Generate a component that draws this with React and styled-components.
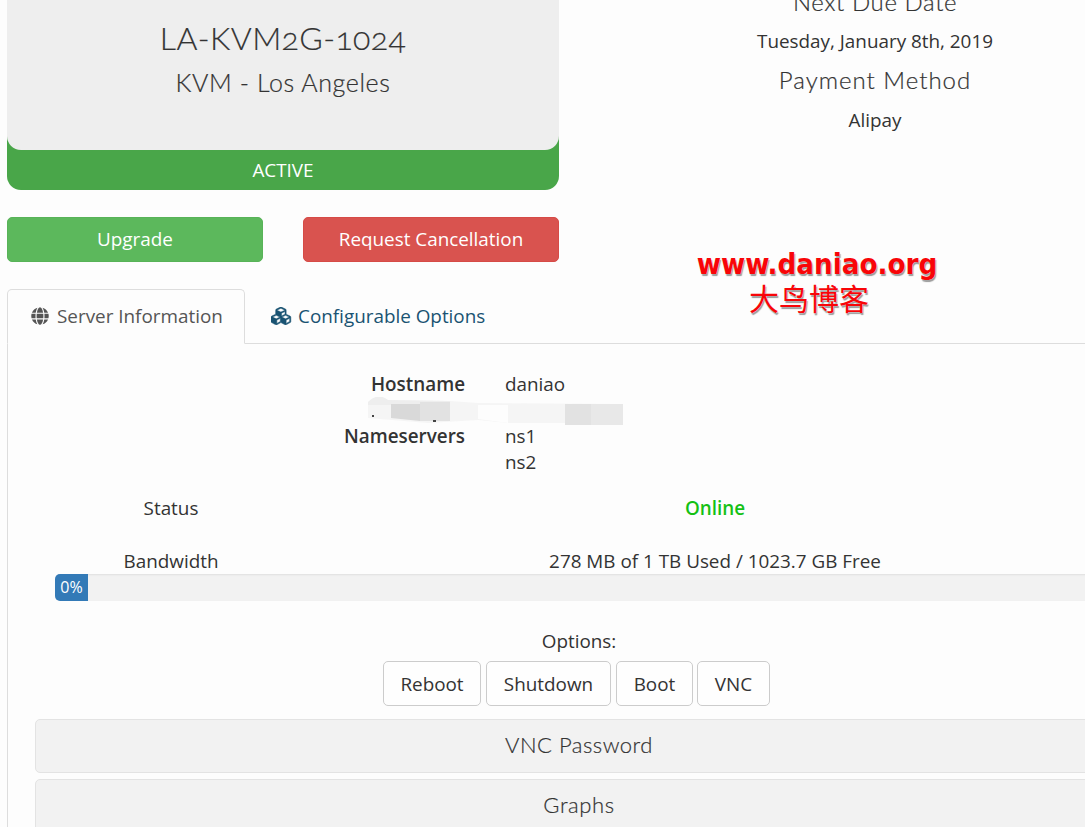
import React from "react";
import styled, { createGlobalStyle } from "styled-components";
import { FaGlobe } from "react-icons/fa";

const GlobalStyle = createGlobalStyle`
  * { box-sizing: border-box; }
  body {
    margin: 0;
    background: #fdfdfd;
    color: #333;
    font: 18.88px/26px "Open Sans", sans-serif;
    overflow: hidden;
  }
`;

const Page = styled.main`
  width: 100%;
  height: 827px;
  padding-left: 7px;
  overflow: hidden;
`;

const Overview = styled.section`
  display: grid;
  grid-template-columns: 552px 552px;
  column-gap: 40px;
  height: 289px;
`;

const Product = styled.div`
  height: 190px;
  background: #49a649;
  border-radius: 0 0 14px 14px;
  text-align: center;
`;

const ProductCard = styled.div`
  height: 150px;
  padding-top: 16px;
  background: #eee;
  border-radius: 0 0 14px 14px;
`;

const Heading = styled.div`
  font-family: Lato, sans-serif;
  font-weight: 300;
  font-variant-numeric: oldstyle-nums;
  font-size: ${(p) => p.$size}px;
  line-height: ${(p) => p.$line}px;
  letter-spacing: ${(p) => p.$track || 0}px;
  -webkit-text-stroke: 0.2px currentColor;
`;

const ProductStatus = styled.div`
  height: 40px;
  line-height: 40px;
  color: #fff;
`;

const Actions = styled.div`
  display: grid;
  grid-template-columns: 1fr 1fr;
  gap: 40px;
  margin-top: 27px;
`;

const ActionButton = styled.button`
  height: 45px;
  padding: 0 0 2px;
  border: 1px solid ${(p) => p.$edge};
  border-radius: 5px;
  background: ${(p) => p.$fill};
  color: #fff;
  font: inherit;
`;

const Billing = styled.div`
  display: flex;
  flex-direction: column;
  align-items: center;
  margin-top: -14px;
`;

const BillingValue = styled.div`
  margin: 11px 0 10px;
  line-height: 26px;

  &:nth-child(4) { margin-top: 12px; }
`;

const Watermark = styled.div`
  margin: 104px 0 0 -116px;
  color: #f80508;
  text-align: center;
  text-shadow: 0 0 1px #fff, 1px 2px 1px #999;
`;

const WatermarkUrl = styled.div`
  font-family: "DejaVu Sans Condensed", "DejaVu Sans", sans-serif;
  font-stretch: condensed;
  font-size: 29.2px;
  line-height: 34px;
  font-weight: 700;
`;

const WatermarkName = styled.div`
  padding: 1px 16px 0 0;
  font-family: "Liberation Serif", "Noto Sans CJK SC", serif;
  font-size: 30px;
  line-height: 36px;
`;

const Tabs = styled.nav`
  display: flex;
  height: 55px;
  border-bottom: 1px solid #ddd;
`;

const Tab = styled.a`
  display: flex;
  align-items: center;
  gap: ${(p) => (p.$active ? 8 : 6)}px;
  height: 55px;
  width: ${(p) => p.$width}px;
  padding-bottom: 2px;
  padding-left: ${(p) => (p.$active ? 23 : 25)}px;
  border: 1px solid ${(p) => (p.$active ? "#ddd" : "transparent")};
  border-bottom-color: ${(p) => (p.$active ? "#fdfdfd" : "transparent")};
  border-radius: 5px 5px 0 0;
  color: ${(p) => (p.$active ? "#555" : "#195372")};
  white-space: nowrap;
  svg { flex: none; }
`;

const Panel = styled.section`
  width: 1144px;
  height: 483px;
  padding: 27px 28px 0 27px;
  border-left: 1px solid #ddd;
`;

const Details = styled.dl`
  display: grid;
  grid-template-columns: 430px 1fr;
  column-gap: 40px;
  margin: 0;
`;

const Term = styled.dt`
  font-weight: 600;
  text-align: right;
`;

const Value = styled.dd`
  margin: 0;
`;

const Redaction = styled.div`
  grid-column: 1 / -1;
  height: 26px;
  padding: 0 0 0 333px;
  svg { display: block; }
`;

const StatRow = styled.div`
  display: grid;
  grid-template-columns: 1fr 3fr;
  margin-top: ${(p) => p.$top}px;
  text-align: center;
`;

const Online = styled.span`
  color: #15c115;
  font-weight: 600;
`;

const Track = styled.div`
  height: 27px;
  margin: 0 20px;
  border-radius: 5px;
  background: #f2f2f2;
  box-shadow: inset 0 1px 2px rgba(0, 0, 0, 0.08);
`;

const Bar = styled.div`
  width: 33px;
  height: 27px;
  border-radius: 5px 0 0 5px;
  background: #337ab7;
  color: #fff;
  font-size: 16px;
  line-height: 27px;
  text-align: center;
`;

const OptionsLabel = styled.div`
  margin-top: 27px;
  text-align: center;
`;

const ButtonRow = styled.div`
  display: flex;
  justify-content: center;
  gap: 5px;
  margin: 7px 5px 0 0;
`;

const PlainButton = styled.button`
  width: ${(p) => p.$width}px;
  height: 45px;
  padding: 0;
  border: 1px solid #ccc;
  border-radius: 5px;
  background: #fefefe;
  color: #333;
  font: inherit;

  &:last-child { margin-left: -1px; }
`;

const Accordion = styled.div`
  height: 54px;
  margin-top: ${(p) => p.$top}px;
  border: 1px solid #e3e3e3;
  border-radius: 5px;
  background: #f2f2f2;
  text-align: center;
`;

function CubesIcon() {
  return (
    <svg width="21" height="18" viewBox="0 0 2304 1792" preserveAspectRatio="none" fill="currentColor" stroke="currentColor" strokeWidth="50">
      <path d="M640 1632l384-192v-314l-384 164v342zm-64-454l404-173-404-173-404 173zm1088 454l384-192v-314l-384 164v342zm-64-454l404-173-404-173-404 173zm-448-293l384-165v-266l-384 164v267zm-64-379l441-189-441-189-441 189zm1088 518v416q0 36-19 67t-52 47l-448 224q-25 14-57 14t-57-14l-448-224q-4-2-7-4-2 2-7 4l-448 224q-25 14-57 14t-57-14l-448-224q-33-16-52-47t-19-67v-416q0-38 21.5-70t56.5-48l434-186v-400q0-38 21.5-70t56.5-48l448-192q23-10 50-10t50 10l448 192q35 16 56.5 48t21.5 70v400l434 186q36 16 57 48t21 70z" />
    </svg>
  );
}

export default function App() {
  return (
    <Page>
      <GlobalStyle />
      <Overview>
        <div>
          <Product>
            <ProductCard>
              <Heading $size={32} $line={44} $track={0.4}>LA-KVM2G-1024</Heading>
              <Heading $size={25} $line={44} $track={0.6}>KVM - Los Angeles</Heading>
            </ProductCard>
            <ProductStatus>ACTIVE</ProductStatus>
          </Product>
          <Actions>
            <ActionButton $fill="#5cb85c" $edge="#58b358">Upgrade</ActionButton>
            <ActionButton $fill="#d9534f" $edge="#d64b47">Request Cancellation</ActionButton>
          </Actions>
        </div>
        <Billing>
          <Heading $size={24} $line={31} $track={0.6}>Next Due Date</Heading>
          <BillingValue>Tuesday, January 8th, 2019</BillingValue>
          <Heading $size={24} $line={31} $track={1}>Payment Method</Heading>
          <BillingValue>Alipay</BillingValue>
          <Watermark>
            <WatermarkUrl>www.daniao.org</WatermarkUrl>
            <WatermarkName>大鸟博客</WatermarkName>
          </Watermark>
        </Billing>
      </Overview>

      <Tabs>
        <Tab $active $width={238}><FaGlobe size={18} />Server Information</Tab>
        <Tab $width={260}><CubesIcon />Configurable Options</Tab>
      </Tabs>

      <Panel>
        <Details>
          <Term>Hostname</Term>
          <Value>daniao</Value>
          <Redaction>
            <svg width="256" height="28" viewBox="0 -2 256 28">
              <path d="M0 3Q10-5 20 1L82 2L110 4L255 5V26H197V24H140L110 21L60 24L0 19Z" fill="#f5f5f5" />
              <path d="M0 3Q10-7 20 1L82 2V6H0Z" fill="#eee" />
              <path d="M23 5H52V22L23 19Z" fill="#d9d9d9" />
              <path d="M52 3H82V22H52Z" fill="#e2e2e2" />
              <path d="M110 6H140V24L110 20Z" fill="#fdfdfd" />
              <path d="M197 5H223V26H197Z" fill="#e2e2e2" />
              <path d="M223 5H255V26H223Z" fill="#e8e8e8" />
              <path d="M4 16h2v2H4zM65 21h3v2h-3z" fill="#444" />
            </svg>
          </Redaction>
          <Term>Nameservers</Term>
          <Value>ns1<br />ns2</Value>
        </Details>
        <StatRow $top={20}>
          <span>Status</span>
          <Online>Online</Online>
        </StatRow>
        <StatRow $top={27}>
          <span>Bandwidth</span>
          <span>278 MB of 1 TB Used / 1023.7 GB Free</span>
        </StatRow>
        <Track><Bar>0%</Bar></Track>
        <OptionsLabel>Options:</OptionsLabel>
        <ButtonRow>
          <PlainButton $width={98}>Reboot</PlainButton>
          <PlainButton $width={125}>Shutdown</PlainButton>
          <PlainButton $width={77}>Boot</PlainButton>
          <PlainButton $width={73}>VNC</PlainButton>
        </ButtonRow>
        <Accordion $top={13}><Heading $size={22} $line={50} $track={0.5}>VNC Password</Heading></Accordion>
        <Accordion $top={6}><Heading $size={22} $line={50} $track={0.6}>Graphs</Heading></Accordion>
      </Panel>
    </Page>
  );
}
